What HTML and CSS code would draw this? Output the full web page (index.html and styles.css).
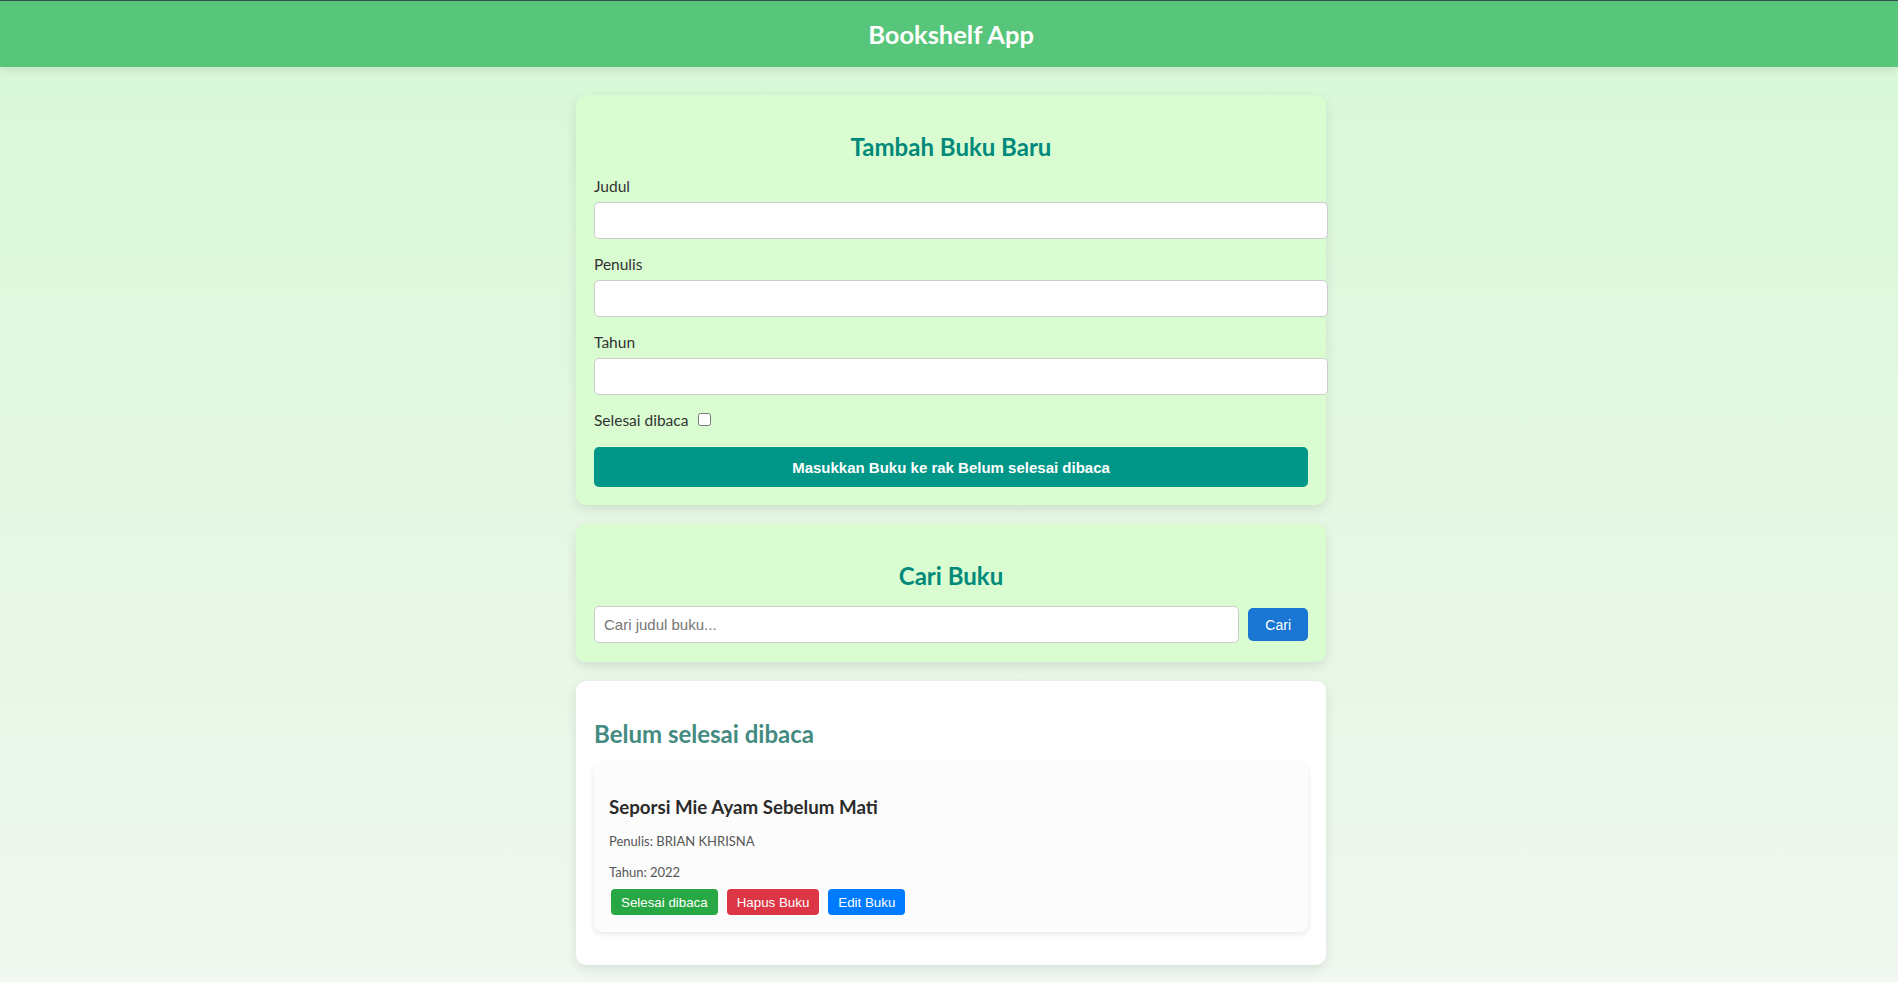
FILE: index.html
```html
<!DOCTYPE html>
<html lang="id">
<head>
<meta charset="utf-8">
<title>Bookshelf App</title>
<link rel="stylesheet" href="styles.css">
</head>
<body>
<header class="app-header">
  <h1 class="app-title">Bookshelf App</h1>
</header>
<main class="main">
  <section class="card card-green">
    <h2 class="card-title center form-title">Tambah Buku Baru</h2>
    <form class="book-form">
      <label class="field-label" for="title">Judul</label>
      <input class="text-input" id="title" type="text">
      <label class="field-label" for="author">Penulis</label>
      <input class="text-input" id="author" type="text">
      <label class="field-label" for="year">Tahun</label>
      <input class="text-input" id="year" type="number">
      <div class="check-row">
        <label class="check-label" for="complete">Selesai dibaca</label><input class="check-input" id="complete" type="checkbox">
      </div>
      <button class="submit-btn" type="button">Masukkan Buku ke rak Belum selesai dibaca</button>
    </form>
  </section>

  <section class="card card-green card-search">
    <h2 class="card-title center">Cari Buku</h2>
    <form class="search-form">
      <input class="search-input" type="text" placeholder="Cari judul buku...">
      <button class="search-btn" type="button">Cari</button>
    </form>
  </section>

  <section class="card card-white">
    <h2 class="card-title shelf-title">Belum selesai dibaca</h2>
    <div class="book-list">
      <article class="book-item">
        <h3 class="book-title">Seporsi Mie Ayam Sebelum Mati</h3>
        <p class="book-meta book-author">Penulis: BRIAN KHRISNA</p>
        <p class="book-meta book-year">Tahun: 2022</p>
        <div class="book-actions">
          <button class="act-btn act-done" type="button">Selesai dibaca</button>
          <button class="act-btn act-delete" type="button">Hapus Buku</button>
          <button class="act-btn act-edit" type="button">Edit Buku</button>
        </div>
      </article>
    </div>
  </section>
</main>
</body>
</html>
```
FILE: styles.css
```css
* {
  font-family: "Lato", "Open Sans", sans-serif;
}

html, body {
  margin: 0;
  min-height: 100%;
}

body {
  background: linear-gradient(to bottom, #d7f9d7 0%, #e6f7e4 55%, #f1f8f1 100%);
  color: #333333;
  min-height: 982px;
}

.app-header {
  background: #57c67a;
  border-top: 1px solid #3e4b52;
  height: 66px;
  display: flex;
  align-items: center;
  justify-content: center;
  padding-left: 4px;
  box-shadow: 0 2px 10px rgba(0, 0, 0, 0.12);
}

.app-title {
  margin: 0;
  color: #ffffff;
  font-size: 25.5px;
  line-height: 32px;
  font-weight: 700;
}

.main {
  padding: 28px 0 20px 4px;
}

.card {
  width: 750px;
  box-sizing: border-box;
  margin: 0 auto 19px;
  padding: 20px 18px 18px;
  border-radius: 10px;
  box-shadow: 0 4px 12px rgba(0, 0, 0, 0.1);
}

.card-green {
  background: #d9fdd1;
}

.card-white {
  background: #ffffff;
}

.card-search {
  padding-bottom: 19px;
}

.card-title {
  margin: 16px 0 14px;
  font-size: 24px;
  line-height: 32px;
  font-weight: 700;
  color: #00897b;
}

.form-title {
  margin-bottom: 13px;
}

.center {
  text-align: center;
}

.shelf-title {
  margin-top: 17px;
  color: #438b80;
}

.book-form {
  display: flex;
  flex-direction: column;
  align-items: flex-start;
}

.field-label {
  display: block;
  font-size: 15.5px;
  line-height: 21px;
  margin-bottom: 5px;
  color: #333333;
}

.text-input,
.search-input {
  font-family: "Liberation Sans", Arial, sans-serif;
  font-size: 15px;
  height: 15px;
  line-height: 15px;
  padding: 10px 9px;
  border: 1px solid #cccccc;
  border-radius: 5px;
  background: #ffffff;
  color: #333333;
  outline: none;
}

.text-input {
  width: 100%;
  margin: 0 0 15px;
}

.search-input::placeholder {
  color: #757575;
}

.check-row {
  display: block;
  height: 21px;
  margin-bottom: 16px;
  font-size: 15.5px;
  line-height: 21px;
}

.check-label {
  font-size: 15.5px;
  color: #333333;
  margin-right: 6px;
}

.check-input {
  width: 13px;
  height: 13px;
  margin: 3px 3px 3px 4px;
}

.submit-btn {
  width: 100%;
  height: 40px;
  border: none;
  border-radius: 5px;
  background: #009688;
  color: #ffffff;
  font-family: "Liberation Sans", Arial, sans-serif;
  font-size: 15px;
  font-weight: 700;
  padding: 0 12px;
}

.search-form {
  display: flex;
  align-items: center;
  gap: 9px;
}

.search-input {
  flex: 1;
  min-width: 0;
  margin: 0;
}

.search-btn {
  height: 33px;
  padding: 0 17px;
  border: none;
  border-radius: 5px;
  background: #1976d2;
  color: #ffffff;
  font-family: "Liberation Sans", Arial, sans-serif;
  font-size: 14px;
}

.book-list {
  display: flex;
  flex-direction: column;
}

.book-item {
  background: #fcfcfc;
  border-radius: 8px;
  padding: 15px 15px 17px;
  margin-bottom: 15px;
  box-shadow: 0 2px 6px rgba(0, 0, 0, 0.1);
}

.book-title {
  margin: 16px 0 12px;
  font-size: 18.72px;
  line-height: 24px;
  font-weight: 700;
  color: #2b2b2b;
}

.book-meta {
  margin: 0;
  font-size: 13px;
  line-height: 20px;
  color: #555555;
}

.book-author {
  margin-bottom: 11px;
}

.book-year {
  margin-bottom: 7px;
}

.book-actions {
  display: flex;
  gap: 9px;
  margin-left: 2px;
}

.act-btn {
  height: 26px;
  padding: 0 10px;
  border: none;
  border-radius: 4px;
  color: #ffffff;
  font-family: "Liberation Sans", Arial, sans-serif;
  font-size: 13.33px;
}

.act-done {
  background: #28a745;
}

.act-delete {
  background: #dc3545;
}

.act-edit {
  background: #007bff;
}
```
